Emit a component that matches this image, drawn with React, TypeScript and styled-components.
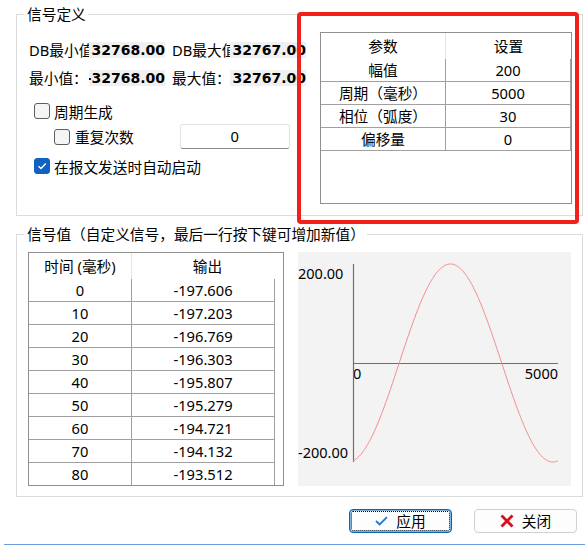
import React from "react";
import styled, { createGlobalStyle } from "styled-components";

const GlobalStyle = createGlobalStyle`
  html, body {
    margin: 0;
    padding: 0;
    background: #ffffff;
  }
  body {
    font-family: "Noto Sans", "Noto Sans CJK SC", sans-serif;
    font-size: 14.7px;
    color: #000;
  }
`;

const Window = styled.div`
  position: relative;
  width: 585px;
  height: 554px;
  overflow: hidden;
  background: #fff;
`;

const Content = styled.div`
  display: flex;
  flex-direction: column;
  padding: 4px 3px 0 16px;
`;

const Group = styled.fieldset<{ $mt?: number }>`
  margin: ${({ $mt }) => $mt || 0}px 0 0 0;
  padding: 0;
  border: 1px solid #dcdcdc;
  min-width: 0;
  width: 567px;
  box-sizing: border-box;
`;

const Caption = styled.legend`
  margin-left: 7px;
  padding: 0 2px 0 3px;
  line-height: 20px;
  white-space: nowrap;
`;

const DefinitionBody = styled.div`
  display: flex;
  height: 191px;
`;

const SettingsColumn = styled.div`
  flex: 1;
  display: flex;
  flex-direction: column;
  padding: 18px 0 0 12px;
`;

const ValueRow = styled.div<{ $mt?: number }>`
  display: flex;
  align-items: center;
  height: 16px;
  margin-top: ${({ $mt }) => $mt || 0}px;
`;

const FieldLabel = styled.span<{ $width: number; $ml?: number }>`
  width: ${({ $width }) => $width}px;
  margin-left: ${({ $ml }) => $ml || 0}px;
  overflow: hidden;
  white-space: nowrap;
  line-height: 16px;
  flex-shrink: 0;
`;

const ReadOut = styled.span`
  width: 76px;
  height: 16px;
  flex-shrink: 0;
  display: flex;
  justify-content: flex-end;
  background: #f0f0f0;
  font-family: "DejaVu Sans", sans-serif;
  font-weight: bold;
  font-size: 14px;
  line-height: 16px;
  overflow: hidden;
  white-space: nowrap;
`;

const CheckRow = styled.label<{ $mt: number; $indent: number; $height?: number }>`
  display: flex;
  align-items: center;
  height: ${({ $height }) => $height || 16}px;
  margin-top: ${({ $mt }) => $mt}px;
  padding-left: ${({ $indent }) => $indent}px;
  gap: 4px;
  white-space: nowrap;
`;

const Box = styled.span<{ $checked?: boolean }>`
  width: 16px;
  height: 16px;
  box-sizing: border-box;
  border-radius: 3px;
  border: 1px solid ${({ $checked }) => ($checked ? "#0f62c0" : "#5f5f5f")};
  background: ${({ $checked }) => ($checked ? "#0f62c0" : "#f5f5f5")};
  display: flex;
  align-items: center;
  justify-content: center;
  flex-shrink: 0;
`;

const CountInput = styled.div`
  width: 110px;
  height: 25px;
  margin-left: 42px;
  box-sizing: border-box;
  border: 1px solid #e2e2e2;
  border-bottom-color: #8a8a8a;
  border-radius: 3px;
  background: #fff;
  text-align: center;
  line-height: 23px;
`;

const Grid = styled.div<{ $width: number; $height: number }>`
  width: ${({ $width }) => $width}px;
  height: ${({ $height }) => $height}px;
  box-sizing: border-box;
  border: 1px solid #8f8f8f;
  background: #fff;
  overflow: hidden;
  flex-shrink: 0;
`;

const ParamGrid = styled(Grid)`
  margin: 8px 10px 0 0;
`;

const HeadRow = styled.div`
  display: flex;
  height: 26px;
`;

const HeadCell = styled.div<{ $width?: number }>`
  ${({ $width }) => ($width ? `width: ${$width}px; border-right: 1px solid #e4e4e4;` : "flex: 1;")}
  box-sizing: border-box;
  text-align: center;
  line-height: 26px;
  white-space: nowrap;
`;

const Rows = styled.div<{ $width: number }>`
  width: ${({ $width }) => $width}px;
`;

const Row = styled.div<{ $last?: boolean }>`
  display: flex;
  height: ${({ $last }) => ($last ? 22 : 23)}px;
  box-sizing: border-box;
  border-bottom: ${({ $last }) => ($last ? "none" : "1px solid #a0a0a0")};
`;

const Cell = styled.div<{ $width: number }>`
  width: ${({ $width }) => $width}px;
  box-sizing: border-box;
  border-right: 1px solid #a0a0a0;
  text-align: center;
  line-height: 22px;
  white-space: nowrap;
`;

const SignalBody = styled.div`
  display: flex;
  gap: 14px;
  padding: 8px 0 10px 11px;
`;

const ChartBox = styled.div`
  width: 273px;
  height: 234px;
  background: #f3f3f3;
`;

const ButtonBar = styled.div`
  display: flex;
  justify-content: flex-end;
  gap: 22px;
  margin-top: 12px;
  padding-right: 5px;
`;

const DialogButton = styled.button<{ $focused?: boolean }>`
  width: 103px;
  height: 24px;
  display: flex;
  align-items: center;
  justify-content: center;
  gap: 8px;
  padding: 0;
  border-radius: 4px;
  border: 1px solid ${({ $focused }) => ($focused ? "#0067c0" : "#d0d0d0")};
  box-shadow: ${({ $focused }) => ($focused ? "inset 0 0 0 0.5px #0067c0" : "none")};
  background: #fdfdfd;
  font-family: inherit;
  font-size: 14.7px;
  line-height: 1;
  color: #000;
  outline: ${({ $focused }) => ($focused ? "1px dotted #000" : "none")};
  outline-offset: -3px;
`;

const StatusLine = styled.div`
  margin: 11px 0 0 4px;
  border-top: 1px solid #6c9ddf;
`;

const Highlight = styled.div`
  position: absolute;
  left: 297px;
  top: 12px;
  width: 282px;
  height: 212px;
  box-sizing: border-box;
  border: 4px solid #f2201a;
  border-radius: 4px;
  pointer-events: none;
`;

const params = [
  ["幅值", "200"],
  ["周期（毫秒）", "5000"],
  ["相位（弧度）", "30"],
  ["偏移量", "0"],
];

const samples = [
  ["0", "-197.606"],
  ["10", "-197.203"],
  ["20", "-196.769"],
  ["30", "-196.303"],
  ["40", "-195.807"],
  ["50", "-195.279"],
  ["60", "-194.721"],
  ["70", "-194.132"],
  ["80", "-193.512"],
];

const Tick = () => (
  <svg width="10" height="8" viewBox="0 0 10 8">
    <path d="M1.5 4.2 L4 6.5 L8.8 1.5" fill="none" stroke="#fff" strokeWidth="1.4" />
  </svg>
);

const Chart = () => {
  const points: string[] = [];
  for (let t = 0; t <= 5000; t += 20) {
    const v = -200 * Math.cos((2 * Math.PI * t) / 5000 + 0.155);
    const x = 55 + (t / 5000) * 205;
    const y = 111 - (v * 99) / 200;
    points.push(`${x.toFixed(2)},${y.toFixed(2)}`);
  }
  return (
    <svg width="273" height="234" viewBox="0 0 273 234">
      <g fontFamily="Noto Sans, sans-serif" fontSize="14.5" fill="#000">
        <text x="0" y="27">200.00</text>
        <text x="0" y="206">-200.00</text>
        <text x="55" y="127">0</text>
        <text x="260" y="127" textAnchor="end">5000</text>
      </g>
      <line x1="55.5" y1="12" x2="55.5" y2="210" stroke="#6e6e6e" strokeWidth="1.2" />
      <line x1="55" y1="111.5" x2="260" y2="111.5" stroke="#6e6e6e" strokeWidth="1" />
      <polyline points={points.join(" ")} fill="none" stroke="#f28b8b" strokeWidth="1" />
    </svg>
  );
};

const App: React.FunctionComponent = () => (
  <Window>
    <GlobalStyle />
    <Content>
      <Group>
        <Caption>信号定义</Caption>
        <DefinitionBody>
          <SettingsColumn>
            <ValueRow>
              <FieldLabel $width={60}>DB最小值</FieldLabel>
              <ReadOut>32768.00</ReadOut>
              <FieldLabel $width={58} $ml={7}>DB最大值</FieldLabel>
              <ReadOut>32767.00</ReadOut>
            </ValueRow>
            <ValueRow $mt={12}>
              <FieldLabel $width={60}>最小值：</FieldLabel>
              <ReadOut>-32768.00</ReadOut>
              <FieldLabel $width={58} $ml={7}>最大值：</FieldLabel>
              <ReadOut>32767.00</ReadOut>
            </ValueRow>
            <CheckRow $mt={17} $indent={5}>
              <Box />
              周期生成
            </CheckRow>
            <CheckRow $mt={5} $indent={25} $height={25}>
              <Box />
              <span style={{ marginLeft: 1 }}>重复次数</span>
              <CountInput>0</CountInput>
            </CheckRow>
            <CheckRow $mt={9} $indent={5}>
              <Box $checked>
                <Tick />
              </Box>
              在报文发送时自动启动
            </CheckRow>
          </SettingsColumn>
          <ParamGrid $width={252} $height={172}>
            <HeadRow>
              <HeadCell $width={125}>参数</HeadCell>
              <HeadCell>设置</HeadCell>
            </HeadRow>
            <Rows $width={250}>
              {params.map(([name, value]) => (
                <Row key={name}>
                  <Cell $width={125}>{name}</Cell>
                  <Cell $width={125}>{value}</Cell>
                </Row>
              ))}
            </Rows>
          </ParamGrid>
        </DefinitionBody>
      </Group>

      <Group $mt={8}>
        <Caption>信号值（自定义信号，最后一行按下键可增加新值）</Caption>
        <SignalBody>
          <Grid $width={256} $height={234}>
            <HeadRow>
              <HeadCell $width={103}>时间 (毫秒)</HeadCell>
              <HeadCell>输出</HeadCell>
            </HeadRow>
            <Rows $width={246}>
              {samples.map(([time, out], i) => (
                <Row key={time} $last={i === samples.length - 1}>
                  <Cell $width={103}>{time}</Cell>
                  <Cell $width={143}>{out}</Cell>
                </Row>
              ))}
            </Rows>
          </Grid>
          <ChartBox>
            <Chart />
          </ChartBox>
        </SignalBody>
      </Group>

      <ButtonBar>
        <DialogButton $focused>
          <svg width="13" height="10" viewBox="0 0 13 10">
            <path d="M1 5 L4.6 8.4 L12 1.2" fill="none" stroke="#2477d2" strokeWidth="1.8" />
          </svg>
          应用
        </DialogButton>
        <DialogButton>
          <svg width="14" height="14" viewBox="0 0 14 14">
            <path d="M1.5 1.5 L12.5 12.5 M12.5 1.5 L1.5 12.5" stroke="#d3101c" strokeWidth="2.8" />
          </svg>
          关闭
        </DialogButton>
      </ButtonBar>
    </Content>
    <StatusLine />
    <Highlight />
  </Window>
);

export default App;
